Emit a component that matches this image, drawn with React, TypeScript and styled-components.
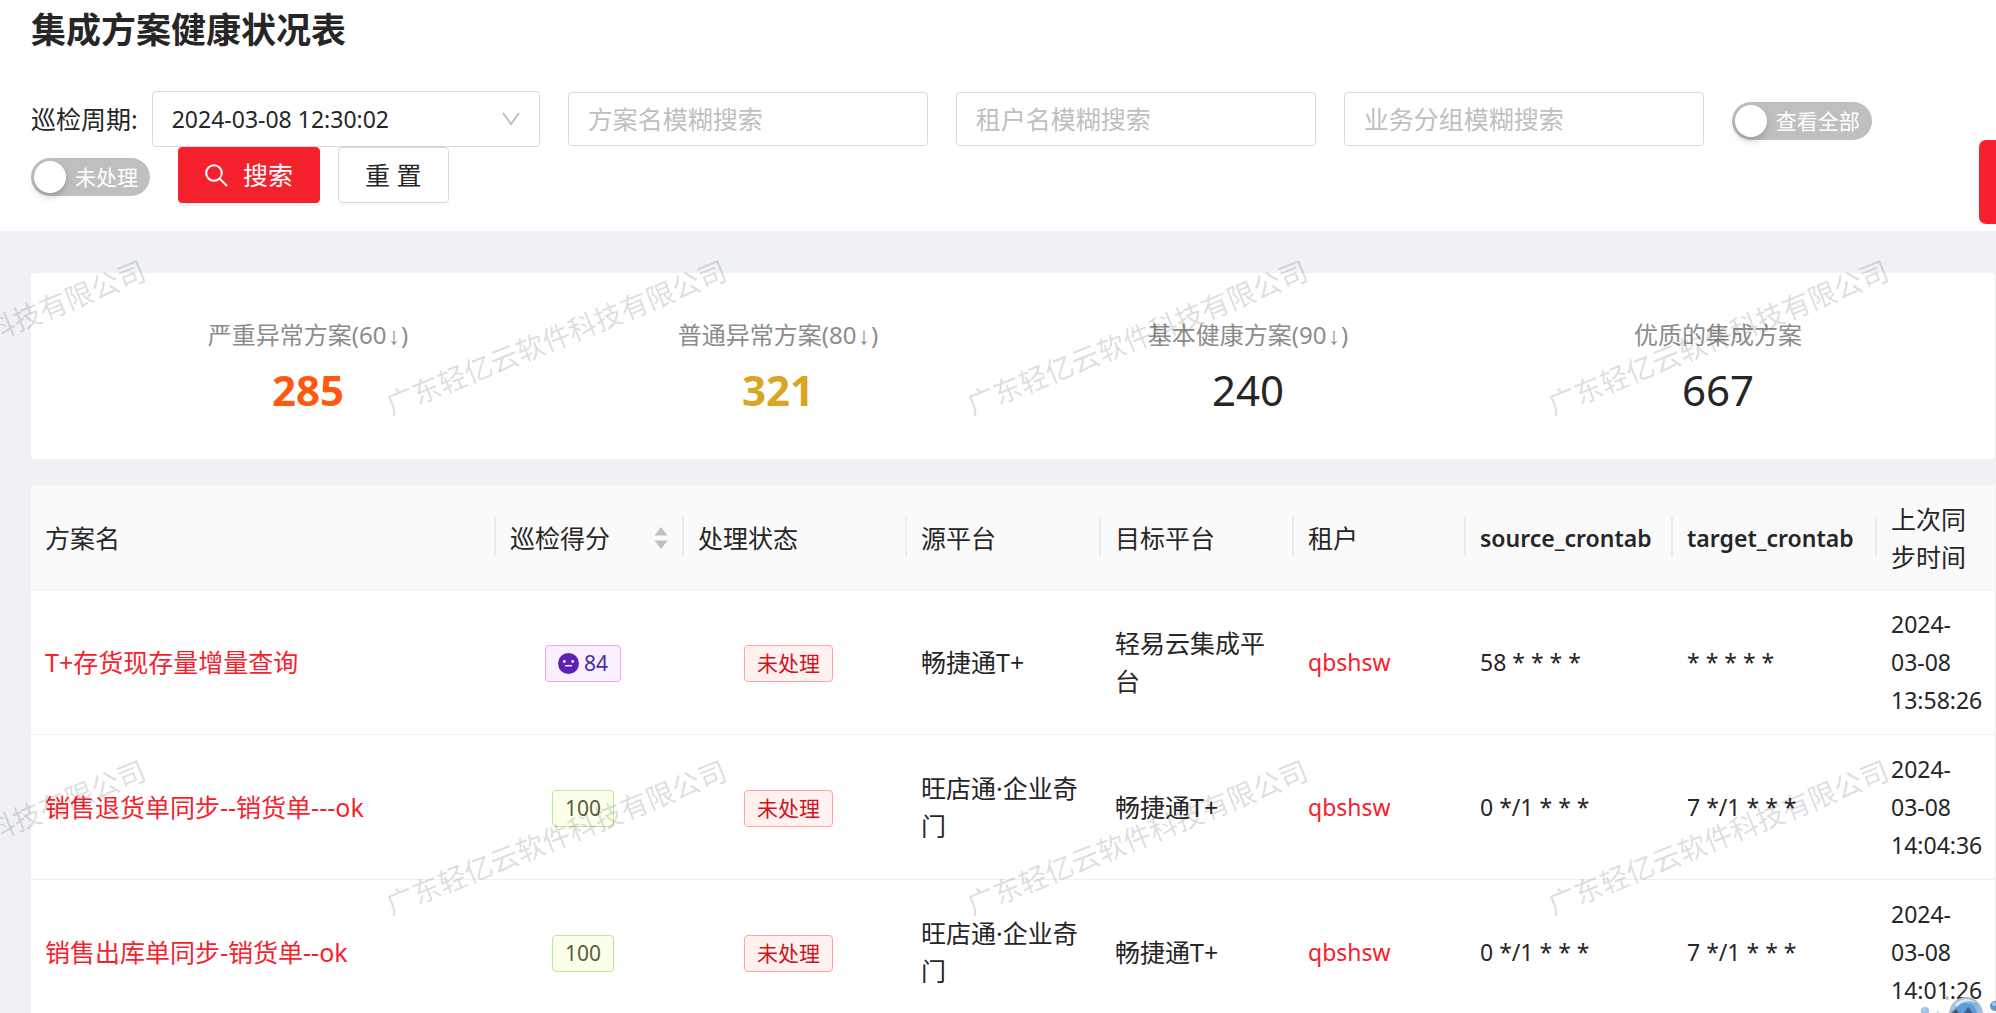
import React from "react";
import styled, { createGlobalStyle, css } from "styled-components";

const GlobalStyle = createGlobalStyle`
  *, *::before, *::after { box-sizing: border-box; }
  body {
    margin: 0;
    background: #eff1f5;
    color: #262626;
    font-family: "Noto Sans", "Noto Sans CJK SC", sans-serif;
    font-size: 25px;
    line-height: 38px;
  }
  input, select, button { font: inherit; color: inherit; }
`;

const Page = styled.div`
  position: relative;
  height: 100vh;
  overflow: hidden;
`;

const Header = styled.header`
  padding: 8px 31px 28px;
  background: #fff;
`;

const Title = styled.h1`
  margin: 0 0 39px;
  font-size: 35px;
  line-height: 44px;
  font-weight: 700;
`;

const Filters = styled.form`
  display: flex;
  flex-wrap: wrap;
  align-items: center;
  column-gap: 28px;
`;

const Field = styled.div`
  display: flex;
  align-items: center;
  gap: 14px;
`;

const SelectBox = styled.div`
  position: relative;
  width: 388px;
`;

const Select = styled.select`
  appearance: none;
  width: 100%;
  height: 56px;
  padding: 0 48px 0 19px;
  border: 1px solid #d9d9d9;
  border-radius: 4px;
  background: #fff;
  font-size: 23px;
`;

const Chevron = styled.svg`
  position: absolute;
  right: 20px;
  top: 20px;
  pointer-events: none;
`;

const TextInput = styled.input`
  width: 360px;
  height: 54px;
  padding: 0 19px;
  border: 1px solid #d9d9d9;
  border-radius: 4px;
  background: #fff;
  outline: none;
  &::placeholder { color: #bfbfbf; opacity: 1; }
`;

const Switch = styled.label`
  display: inline-flex;
  align-items: center;
  gap: 9px;
  height: 38px;
  margin-top: 4px;
  padding: 0 12px 0 3px;
  border-radius: 19px;
  background: #bfbfbf;
  color: #fff;
  font-size: 21px;
  cursor: pointer;
`;

const Knob = styled.input`
  appearance: none;
  width: 32px;
  height: 32px;
  margin: 0;
  border-radius: 50%;
  background: #fff;
  box-shadow: 0 4px 7px rgba(0, 35, 11, 0.2);
`;

const Actions = styled.div`
  display: flex;
  gap: 18px;
`;

const Button = styled.button<{ $primary?: boolean }>`
  display: inline-flex;
  align-items: center;
  gap: 15px;
  height: 56px;
  padding: 0 26px;
  border: 1px solid #d9d9d9;
  border-radius: 4px;
  background: #fff;
  box-shadow: 0 3px 0 rgba(0, 0, 0, 0.02);
  cursor: pointer;
  ${(p) =>
    p.$primary &&
    css`
      border-color: #f5222d;
      background: #f5222d;
      color: #fff;
      box-shadow: 0 3px 0 rgba(0, 0, 0, 0.05);
    `}
`;

const Main = styled.main`
  position: relative;
  display: flex;
  flex-direction: column;
  gap: 26px;
  padding: 42px 1px 42px 31px;
`;

const Stats = styled.section`
  display: grid;
  grid-template-columns: repeat(4, 1fr);
  padding: 43px 42px 41px;
  border-radius: 4px;
  background: #fff;
  text-align: center;
`;

const StatLabel = styled.div`
  margin-bottom: 8px;
  color: #8c8c8c;
  font-size: 24px;
`;

const Arrow = styled.span`
  font-family: "Liberation Mono", monospace;
  line-height: 1;
`;

const StatValue = styled.div<{ $color?: string }>`
  font-size: 42px;
  line-height: 56px;
  color: ${(p) => p.$color ?? "#262626"};
  font-weight: ${(p) => (p.$color ? 700 : 400)};
`;

const Table = styled.table`
  width: 100%;
  table-layout: fixed;
  border-collapse: separate;
  border-spacing: 0;
  border-radius: 4px 4px 0 0;
  background: #fff;
`;

const Col = styled.col<{ $width?: number }>`
  width: ${(p) => (p.$width ? `${p.$width}px` : "auto")};
`;

const HeadCell = styled.th<{ $latin?: boolean }>`
  position: relative;
  padding: 15px 14px 13px;
  border-bottom: 1px solid #f0f0f0;
  background: #fafafa;
  text-align: left;
  font-size: ${(p) => (p.$latin ? "23px" : "25px")};
  font-weight: ${(p) => (p.$latin ? 600 : 400)};
  &:first-child { border-top-left-radius: 4px; }
  &:last-child { border-top-right-radius: 4px; }
  &:not(:last-child)::after {
    content: "";
    position: absolute;
    right: 0;
    top: 32px;
    width: 2px;
    height: 39px;
    background: #ebebeb;
  }
`;

const Sortable = styled.div`
  display: flex;
  align-items: center;
  justify-content: space-between;
  padding-right: 2px;
`;

const Cell = styled.td<{ $center?: boolean; $latin?: boolean }>`
  padding: 15px 14px;
  border-bottom: 1px solid #f0f0f0;
  font-size: ${(p) => (p.$latin ? "23px" : "25px")};
  text-align: ${(p) => (p.$center ? "center" : "left")};
`;

const Link = styled.a`
  color: #f5222d;
  text-decoration: none;
`;

type Tone = "red" | "green" | "purple";

const tones: Record<Tone, { fg: string; bg: string; line: string }> = {
  red: { fg: "#cf1322", bg: "#fff1f0", line: "#ffa39e" },
  green: { fg: "#595c3a", bg: "#fbffeb", line: "#b7eb8f" },
  purple: { fg: "#4a2ba8", bg: "#f9f0ff", line: "#eba3f2" },
};

const Tag = styled.span<{ $tone: Tone }>`
  display: inline-flex;
  align-items: center;
  gap: 5px;
  height: 37px;
  margin-right: 14px;
  padding: 0 12px;
  border: 1px solid ${(p) => tones[p.$tone].line};
  border-radius: 4px;
  background: ${(p) => tones[p.$tone].bg};
  color: ${(p) => tones[p.$tone].fg};
  font-size: 21px;
  line-height: 35px;
  vertical-align: middle;
`;

const Watermarks = styled.div`
  position: absolute;
  inset: 0;
  overflow: hidden;
  pointer-events: none;
`;

const WatermarkGrid = styled.div`
  display: grid;
  grid-template-columns: repeat(4, 581px);
  grid-auto-rows: 500px;
  place-items: center;
  margin: -144px 0 0 -315px;
`;

const Watermark = styled.span`
  color: rgba(0, 0, 0, 0.15);
  font-size: 28px;
  white-space: nowrap;
  transform: rotate(-22deg);
`;

const SideTab = styled.button`
  position: absolute;
  right: 0;
  top: 140px;
  width: 17px;
  height: 84px;
  padding: 0;
  border: 0;
  border-radius: 7px 0 0 7px;
  background: #f5222d;
  cursor: pointer;
`;

const Mascot = styled.svg`
  position: absolute;
  right: 0;
  bottom: 0;
`;

const MehIcon = () => (
  <svg width="21" height="21" viewBox="0 0 21 21" aria-hidden="true">
    <circle cx="10.5" cy="10.5" r="10.5" fill="#5a22b0" />
    <circle cx="6.3" cy="8.5" r="1.4" fill="#f9f0ff" />
    <circle cx="14.7" cy="8.5" r="1.4" fill="#f9f0ff" />
    <path d="M7 12.7h7" stroke="#f9f0ff" strokeWidth="1.5" />
  </svg>
);

const SearchIcon = () => (
  <svg width="23" height="23" viewBox="0 0 23 23" fill="none" stroke="#fff" strokeWidth="2" aria-hidden="true">
    <circle cx="9" cy="9" r="7.8" />
    <path d="M14.6 14.6 22 22" />
  </svg>
);

const SortIcon = () => (
  <svg width="14" height="22" viewBox="0 0 14 22" fill="#bfbfbf" aria-hidden="true">
    <path d="M7 0l6.5 8.500H.5zM7 22 .5 13.500h13z" />
  </svg>
);

const columns: { title: string; width?: number; sortable?: boolean; latin?: boolean }[] = [
  { title: "方案名" },
  { title: "巡检得分", width: 188, sortable: true },
  { title: "处理状态", width: 223 },
  { title: "源平台", width: 194 },
  { title: "目标平台", width: 193 },
  { title: "租户", width: 172 },
  { title: "source_crontab", width: 207, latin: true },
  { title: "target_crontab", width: 204, latin: true },
  { title: "上次同步时间", width: 118 },
];

const rows = [
  { name: "T+存货现存量增量查询", score: 84, source: "畅捷通T+", target: "轻易云集成平台", sourceCron: "58 * * * *", targetCron: "* * * * *", time: "2024-03-08 13:58:26" },
  { name: "销售退货单同步--销货单---ok", score: 100, source: "旺店通·企业奇门", target: "畅捷通T+", sourceCron: "0 */1 * * *", targetCron: "7 */1 * * *", time: "2024-03-08 14:04:36" },
  { name: "销售出库单同步-销货单--ok", score: 100, source: "旺店通·企业奇门", target: "畅捷通T+", sourceCron: "0 */1 * * *", targetCron: "7 */1 * * *", time: "2024-03-08 14:01:26" },
];

const stats: { label: string; limit?: number; value: number; color?: string }[] = [
  { label: "严重异常方案", limit: 60, value: 285, color: "#ff590f" },
  { label: "普通异常方案", limit: 80, value: 321, color: "#daa520" },
  { label: "基本健康方案", limit: 90, value: 240 },
  { label: "优质的集成方案", value: 667 },
];

const searches = ["方案名模糊搜索", "租户名模糊搜索", "业务分组模糊搜索"];

export default function App() {
  return (
    <Page>
      <GlobalStyle />
      <Header>
        <Title>集成方案健康状况表</Title>
        <Filters onSubmit={(e) => e.preventDefault()}>
          <Field>
            <label htmlFor="period">巡检周期:</label>
            <SelectBox>
              <Select id="period">
                <option>2024-03-08 12:30:02</option>
              </Select>
              <Chevron width="18" height="16" viewBox="0 0 18 16" fill="none" stroke="#bfbfbf" strokeWidth="2" aria-hidden="true">
                <path d="M1 2l8 11 8-11" />
              </Chevron>
            </SelectBox>
          </Field>
          {searches.map((text) => (
            <TextInput key={text} type="text" placeholder={text} aria-label={text} />
          ))}
          <Switch>
            <Knob type="checkbox" />
            查看全部
          </Switch>
          <Switch>
            <Knob type="checkbox" />
            未处理
          </Switch>
          <Actions>
            <Button type="submit" $primary>
              <SearchIcon />
              搜索
            </Button>
            <Button type="reset">重 置</Button>
          </Actions>
        </Filters>
      </Header>

      <Main>
        <Stats>
          {stats.map((s) => (
            <div key={s.label}>
              <StatLabel>
                {s.label}
                {s.limit && (
                  <>
                    ({s.limit}
                    <Arrow>↓</Arrow>)
                  </>
                )}
              </StatLabel>
              <StatValue $color={s.color}>{s.value}</StatValue>
            </div>
          ))}
        </Stats>

        <Table>
          <colgroup>
            {columns.map((c) => (
              <Col key={c.title} $width={c.width} />
            ))}
          </colgroup>
          <thead>
            <tr>
              {columns.map((c) => (
                <HeadCell key={c.title} scope="col" $latin={c.latin}>
                  {c.sortable ? (
                    <Sortable>
                      {c.title}
                      <SortIcon />
                    </Sortable>
                  ) : (
                    c.title
                  )}
                </HeadCell>
              ))}
            </tr>
          </thead>
          <tbody>
            {rows.map((r) => (
              <tr key={r.name}>
                <Cell><Link href="#plan">{r.name}</Link></Cell>
                <Cell $center>
                  <Tag $tone={r.score < 100 ? "purple" : "green"}>
                    {r.score < 100 && <MehIcon />}
                    {r.score}
                  </Tag>
                </Cell>
                <Cell $center><Tag $tone="red">未处理</Tag></Cell>
                <Cell>{r.source}</Cell>
                <Cell>{r.target}</Cell>
                <Cell $latin><Link href="#tenant">qbshsw</Link></Cell>
                <Cell $latin>{r.sourceCron}</Cell>
                <Cell $latin>{r.targetCron}</Cell>
                <Cell $latin>{r.time}</Cell>
              </tr>
            ))}
          </tbody>
        </Table>

        <Watermarks aria-hidden="true">
          <WatermarkGrid>
            {Array.from({ length: 8 }, (_, i) => (
              <Watermark key={i}>广东轻亿云软件科技有限公司</Watermark>
            ))}
          </WatermarkGrid>
        </Watermarks>
      </Main>

      <SideTab type="button" aria-label="设置" />
      <Mascot width="80" height="20" viewBox="0 0 80 20" aria-hidden="true">
        <defs>
          <linearGradient id="orb" x1="0" y1="0" x2="1" y2="1">
            <stop offset="0" stopColor="#a9d0f2" />
            <stop offset="0.5" stopColor="#7fb2e2" />
            <stop offset="1" stopColor="#c8d6e4" />
          </linearGradient>
        </defs>
        <circle cx="50" cy="21" r="16" fill="url(#orb)" stroke="#b3bcc8" strokeWidth="2" />
        <path d="M37 20c2-7 8-11 14-10 6 1 9 5 10 10z" fill="#5f9bd6" />
        <path d="M39 12c4-6 14-9 21-2-7-3-14-2-19 4z" fill="#d6eafa" />
        <path d="M48 20l4-6 5 6z" fill="#3a5f8c" />
        <path d="M35 20l5-4 3 4z" fill="#4d5566" />
        <circle cx="9" cy="18" r="4" fill="#9dc1e4" />
        <circle cx="8" cy="17" r="1" fill="#c9e0f4" />
        <circle cx="22" cy="19" r="1" fill="#bccbdc" />
        <circle cx="31" cy="5" r="2" fill="#a9c6e6" />
        <circle cx="79" cy="13" r="5" fill="#5d96cf" />
        <circle cx="78" cy="11" r="2" fill="#a4c9ea" />
      </Mascot>
    </Page>
  );
}
